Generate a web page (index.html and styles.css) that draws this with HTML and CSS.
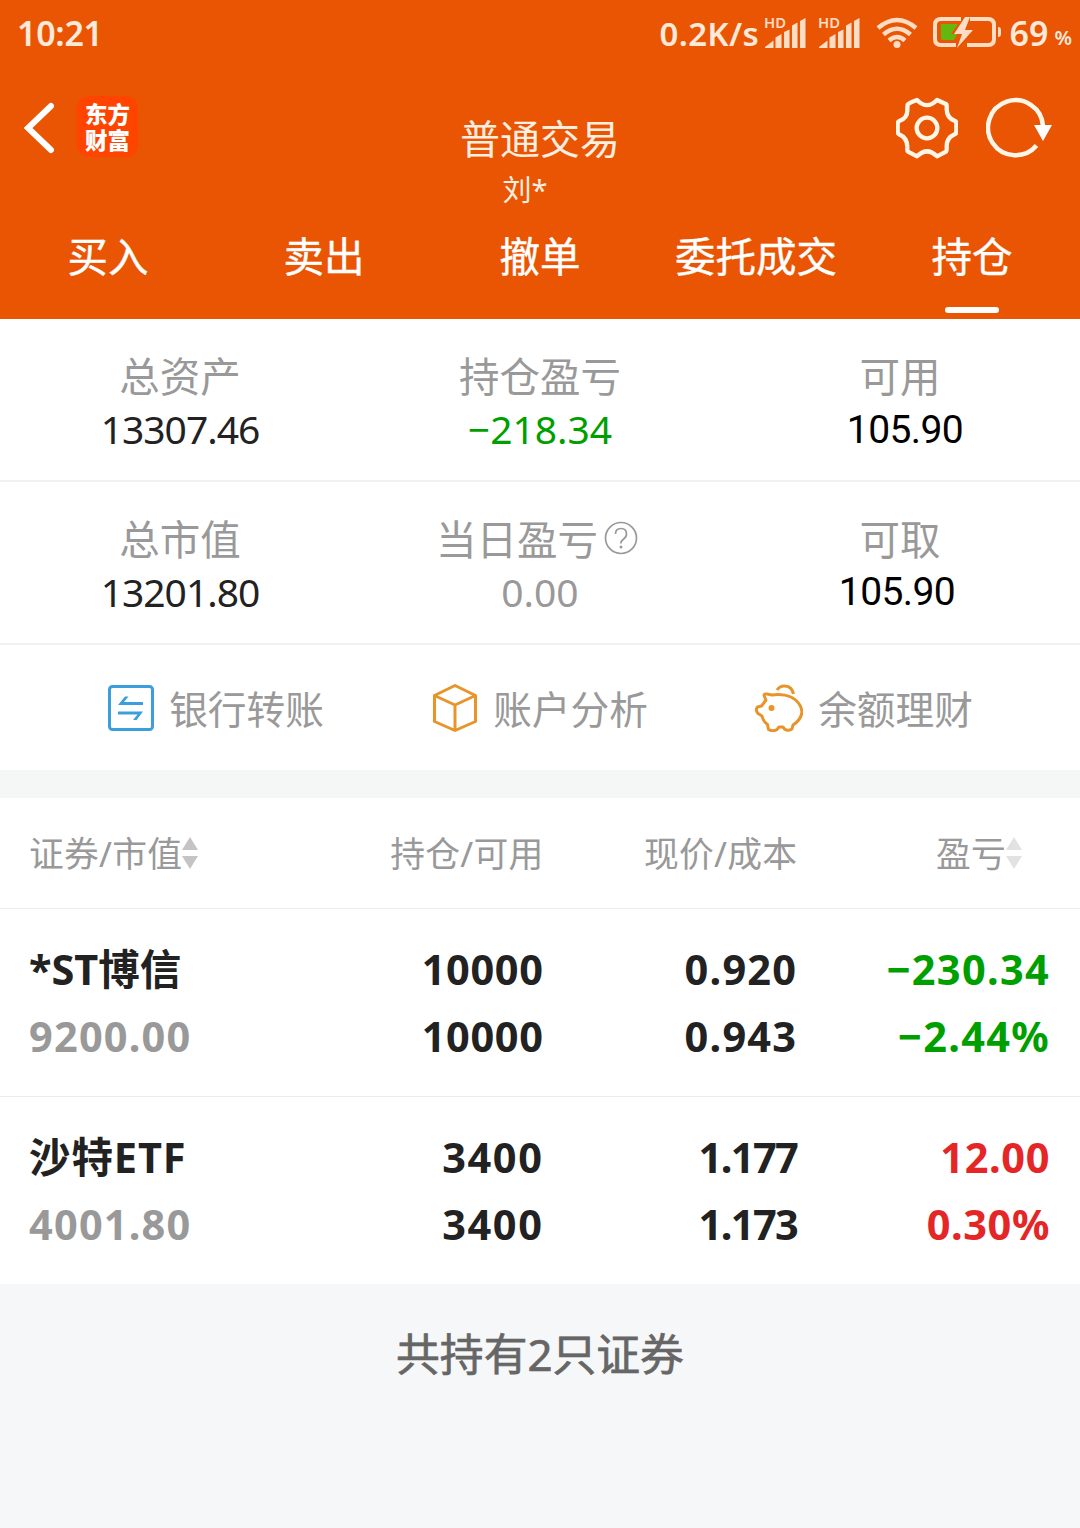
FILE: index.html
```html
<!DOCTYPE html>
<html lang="zh-CN">

<head>
    <meta charset="UTF-8">
    <meta name="viewport" content="width=device-width, initial-scale=1.0">
    <title>普通交易</title>
    <link rel="stylesheet" href="styles.css">
</head>

<body>
    <header class="header">
        <div class="status-bar">
            <div class="clock">10:21</div>
            <div class="status-icons">
                <span class="speed">0.2K/s</span>
                <svg class="signal" width="42" height="34" viewBox="0 0 42 34">
                    <text x="-1" y="12" textLength="22" lengthAdjust="spacingAndGlyphs">HD</text>
                    <path d="M0 32v-1l8.500-6.500V32zM10.500 21.500l6-3.500V32h-6zM19 16l5.500-2.500V32H19zM27 9.500l5.500-3V32H27zM35 5l5.500-3V32H35z" />
                </svg>
                <svg class="signal second" width="42" height="34" viewBox="0 0 42 34">
                    <text x="-1" y="12" textLength="22" lengthAdjust="spacingAndGlyphs">HD</text>
                    <path d="M0 32v-1l8.500-6.500V32zM10.500 21.500l6-3.500V32h-6zM19 16l5.500-2.500V32H19zM27 9.500l5.500-3V32H27zM35 5l5.500-3V32H35z" />
                </svg>
                <svg class="wifi" width="42" height="32" viewBox="0 0 42 32">
                    <path d="M2 11Q21-5 40 11M7.500 17.500Q21 6 34.500 17.500M13 23.500Q21 16.500 29 23.500" />
                    <circle cx="21" cy="27.500" r="3.500" />
                </svg>
                <svg class="battery" width="70" height="34" viewBox="0 0 70 34">
                    <path class="level" d="M9 8h17l-7 10h6l-3 6H11q-2 0-2-2z" />
                    <path class="case" d="M29 3H9Q3 3 3 9v14q0 6 6 6h15M38 3h18q6 0 6 6v14q0 6-6 6H35" />
                    <path class="fill" d="M33 1L22 18h8l-5 14 16-18h-8l5-13zM66 11q3 0 3 3v4q0 3-3 3z" />
                </svg>
                <span class="percent">69</span>
                <span class="percent-sign">%</span>
            </div>
        </div>

        <div class="nav">
            <div class="nav-left">
                <svg class="back" width="32" height="52" viewBox="0 0 32 52">
                    <path d="M28 4L5 26l23 22" />
                </svg>
                <div class="logo">东方<br>财富</div>
            </div>
            <div class="title">
                <div class="title-main">普通交易</div>
                <div class="title-sub">刘*</div>
            </div>
            <div class="nav-right">
                <svg width="62" height="62" viewBox="50 50 186 186">
                    <path d="M85 73Q88 68 113 59Q143 90 173 59L201 72Q203 76 202 86Q202 113 227 122Q231 124 231 130V156Q231 160 226 162Q202 172 202 198Q203 210 200 214L173 228Q143 198 113 228L86 214Q83 212 84 202Q85 173 59 162Q55 160 55 155V131Q55 124 60 122Q86 113 84 86Z" />
                    <circle cx="143" cy="143" r="31" />
                </svg>
                <svg class="refresh" width="66" height="62" viewBox="0 0 66 62">
                    <path d="M50.500 48.500A27.500 27.500 0 1 1 57 29" />
                    <polygon points="48,28 66,28 57,44" />
                </svg>
            </div>
        </div>

        <div class="tabs">
            <div class="tab">买入</div>
            <div class="tab">卖出</div>
            <div class="tab">撤单</div>
            <div class="tab">委托成交</div>
            <div class="tab active">持仓</div>
        </div>
    </header>

    <section class="summary">
        <div class="summary-row">
            <div class="cell">
                <div class="label">总资产</div>
                <div class="value">13307.46</div>
            </div>
            <div class="cell">
                <div class="label">持仓盈亏</div>
                <div class="value wide down">−218.34</div>
            </div>
            <div class="cell">
                <div class="label">可用</div>
                <div class="value cash">105.90</div>
            </div>
        </div>
        <div class="summary-row">
            <div class="cell">
                <div class="label">总市值</div>
                <div class="value">13201.80</div>
            </div>
            <div class="cell">
                <div class="label with-help">当日盈亏
                    <svg class="help" width="34" height="34" viewBox="0 0 34 34">
                        <circle cx="17" cy="17" r="15.500" />
                        <path d="M11.500 13q0-5.500 5.500-5.500t5.500 5.500q0 3-3 5.200t-2.500 4.300" />
                        <circle class="dot" cx="17" cy="26" r="1.500" />
                    </svg>
                </div>
                <div class="value wide muted">0.00</div>
            </div>
            <div class="cell">
                <div class="label">可取</div>
                <div class="value cash withdraw">105.90</div>
            </div>
        </div>
    </section>

    <section class="shortcuts">
        <div class="shortcut">
            <svg class="blue" width="46" height="46" viewBox="0 0 46 46">
                <rect x="1.500" y="1.500" width="43" height="43" rx="3" />
                <path class="arrow" d="M10 20L17 11.500H20.500L16 17H35V20ZM10 26.500H35L28.500 35H25L29.500 29.500H10Z" />
            </svg>
            <span>银行转账</span>
        </div>
        <div class="shortcut">
            <svg class="orange" width="46" height="48" viewBox="0 0 46 48">
                <path d="M23 1.500L43.500 11.500V37.500L23 46.500L2.500 37.500V11.500ZM2.500 11.500L23 21L43.500 11.500M23 21V46.500" />
            </svg>
            <span>账户分析</span>
        </div>
        <div class="shortcut">
            <svg class="orange" width="48" height="48" viewBox="0 0 48 48">
                <path d="M9 11.500Q9 9.500 12 10L17 11Q28 9.500 36 13Q46 18 47 28Q46 36 38 41L37 45Q33 47.500 29.500 45L28 43H24L22 45.500Q18 48 13.500 45.500L12.500 40.500Q8 37 7 32L3 29.500Q0 26 2.500 23L6.500 22L11 16Z" />
                <path d="M22 6Q25 1.500 30 2Q37 2.500 38.500 10" />
                <circle class="dot" cx="16.500" cy="24" r="3" />
            </svg>
            <span>余额理财</span>
        </div>
    </section>

    <section class="holdings">
        <div class="row head">
            <div class="col name">证券/市值<svg class="sort" width="16" height="32" viewBox="0 0 16 32">
                    <path d="M8 0l8 13H0zM8 32l8-13H0z" />
                </svg></div>
            <div class="col amount">持仓/可用</div>
            <div class="col price">现价/成本</div>
            <div class="col profit">盈亏<svg class="sort light" width="16" height="32" viewBox="0 0 16 32">
                    <path d="M8 0l8 13H0zM8 32l8-13H0z" />
                </svg></div>
        </div>
        <div class="row">
            <div class="col name">
                <div>*ST博信</div>
                <div class="market muted">9200.00</div>
            </div>
            <div class="col amount">
                <div>10000</div>
                <div>10000</div>
            </div>
            <div class="col price">
                <div>0.920</div>
                <div>0.943</div>
            </div>
            <div class="col profit down">
                <div>−230.34</div>
                <div>−2.44%</div>
            </div>
        </div>
        <div class="row">
            <div class="col name etf">
                <div>沙特ETF</div>
                <div class="market muted">4001.80</div>
            </div>
            <div class="col amount etf">
                <div>3400</div>
                <div>3400</div>
            </div>
            <div class="col price tight">
                <div>1.177</div>
                <div>1.173</div>
            </div>
            <div class="col profit etf up">
                <div>12.00</div>
                <div>0.30%</div>
            </div>
        </div>
    </section>

    <footer class="footer">共持有2只证券</footer>
</body>

</html>
```
FILE: styles.css
```css
* {
    box-sizing: border-box;
}

body {
    margin: 0;
    min-height: 1528px;
    background-color: #f6f7f9;
    color: #222;
    font-family: "Noto Sans", "Noto Sans CJK SC", sans-serif;
}

svg {
    display: block;
    flex: none;
}

/* Header */
.header {
    height: 319px;
    background-color: #ea5504;
    color: #fff;
}

.status-bar {
    display: flex;
    justify-content: space-between;
    align-items: center;
    height: 66px;
    padding: 0 8px 0 17px;
    color: #ffead9;
    font-size: 34px;
    font-weight: 600;
}

.clock {
    letter-spacing: -0.3px;
}

.status-icons {
    display: flex;
    align-items: center;
}

.speed {
    width: 105px;
    font-size: 33px;
    letter-spacing: 0.3px;
    white-space: nowrap;
}

.signal {
    fill: #ffdcc4;
    overflow: visible;
}

.signal text {
    font-size: 15px;
    font-weight: 600;
}

.second {
    margin-left: 12px;
}

.wifi {
    margin-left: 15px;
    fill: #ffdcc4;
}

.wifi path {
    fill: none;
    stroke: #ffdcc4;
    stroke-width: 4.5;
}

.battery {
    margin: 0 8px 0 14px;
}

.battery .level {
    fill: #64b70f;
}

.battery .case {
    fill: none;
    stroke: #ffdcc4;
    stroke-width: 4;
}

.battery .fill {
    fill: #ffdcc4;
}

.percent-sign {
    margin: 8px 0 0 6px;
    font-size: 20px;
}

.nav {
    display: flex;
    justify-content: space-between;
    height: 154px;
    padding: 0 28px 0 23px;
}

.nav-left,
.nav-right {
    display: flex;
}

.nav-left {
    width: 160px;
    padding-top: 30px;
}

.back {
    margin-top: 6px;
    fill: none;
    stroke: #fff;
    stroke-width: 6;
    stroke-linecap: round;
}

.logo {
    width: 61px;
    height: 61px;
    margin-left: 22px;
    padding-top: 4px;
    border-radius: 12px;
    background-color: #ff4400;
    font-family: "Noto Sans CJK SC", sans-serif;
    font-size: 22.5px;
    font-weight: 900;
    line-height: 26px;
    text-align: center;
}

.title {
    padding-top: 45px;
    text-align: center;
    color: #ffefe0;
}

.title-main {
    font-size: 40px;
    line-height: 56px;
}

.title-sub {
    margin-right: 30px;
    font-size: 29px;
    line-height: 46px;
}

.nav-right {
    width: 155px;
    padding-top: 31px;
    gap: 28px;
    justify-content: flex-end;
    fill: none;
    stroke: #fff6e8;
}

.nav-right svg {
    stroke-width: 13;
    stroke-linejoin: round;
}

.nav-right .refresh {
    stroke-width: 4.5;
}

.refresh polygon {
    fill: #fff;
    stroke: none;
}

.tabs {
    display: flex;
    height: 99px;
}

.tab {
    display: flex;
    flex-direction: column;
    align-items: center;
    justify-content: space-between;
    width: 216px;
    padding: 7px 0 6px;
    font-size: 40.5px;
    line-height: 60px;
    -webkit-text-stroke: 0.4px #fff;
}

.tab.active::after {
    content: "";
    width: 54px;
    height: 6px;
    border-radius: 3px;
    background-color: #fff;
}

/* Account summary */
.summary,
.shortcuts,
.holdings {
    background-color: #fff;
}

.summary-row {
    display: flex;
    height: 163px;
    padding-top: 29px;
    border-bottom: 2px solid #f0f1f1;
}

.cell {
    width: 360px;
    text-align: center;
}

.label {
    padding-top: 1px;
    color: #999;
    font-size: 40.5px;
    line-height: 55px;
}

.with-help {
    display: flex;
    justify-content: center;
    align-items: center;
    gap: 6px;
    margin-left: -6px;
}

.help {
    margin-top: -4px;
    fill: none;
    stroke: #999;
    stroke-width: 1.7;
}

.dot {
    stroke: none;
}

.help .dot {
    fill: #999;
}

.value {
    font-size: 39px;
    line-height: 50px;
    letter-spacing: -1px;
}

.value.wide {
    letter-spacing: 0;
}

.value.cash {
    padding: 1px 0 0 10px;
    color: #000;
    font-family: Roboto, sans-serif;
    letter-spacing: -0.6px;
}

.value.withdraw {
    padding: 0 6px 0 0;
}

.muted {
    color: #999;
}

.down {
    color: #009f00;
}

.up {
    color: #e52626;
}

/* Shortcuts */
.shortcuts {
    display: flex;
    height: 125px;
    padding: 0 54px;
}

.shortcut {
    display: flex;
    justify-content: center;
    align-items: center;
    gap: 15px;
    width: 324px;
    color: #999;
    font-size: 38.7px;
}

.shortcut span {
    margin-top: -2px;
}

.shortcut svg {
    fill: none;
    stroke-width: 3;
    stroke-linejoin: round;
}

.blue {
    stroke: #3a9fdc;
}

.blue .arrow {
    fill: #3a9fdc;
    stroke: none;
}

.orange {
    stroke: #e8942a;
}

.orange .dot {
    fill: #e8942a;
}

/* Holdings */
.holdings {
    border-top: 28px solid #f5f7f7;
}

.row {
    display: flex;
    height: 188px;
    padding: 27px 30px 0 29px;
    font-size: 41.5px;
    font-weight: 700;
    line-height: 67px;
    border-bottom: 1px solid #ececec;
}

.row:last-child {
    height: 187px;
    border-bottom: none;
}

.row.head {
    align-items: center;
    height: 111px;
    padding-top: 0;
    color: #999;
    font-size: 34.8px;
    font-weight: 400;
}

.col {
    text-align: right;
}

.name {
    width: 251px;
    text-align: left;
}

.amount {
    width: 264px;
    letter-spacing: 0.6px;
}

.price {
    width: 254px;
    letter-spacing: 1.2px;
}

.profit {
    width: 253px;
    letter-spacing: 1.3px;
}

.market {
    letter-spacing: 1.2px;
}

.name.etf {
    letter-spacing: 0.9px;
}

.amount.etf {
    letter-spacing: 1.6px;
}

.price.tight {
    letter-spacing: -1.6px;
}

.profit.etf {
    letter-spacing: 0.6px;
}

.head .col {
    letter-spacing: 0.2px;
}

.head .name,
.head .profit {
    display: flex;
    align-items: center;
}

.head .profit {
    justify-content: flex-end;
    padding-right: 28px;
}

.sort {
    fill: #c4c4c4;
}

.sort.light {
    fill: #e2e2e2;
}

.footer {
    padding-top: 40px;
    color: #666;
    text-align: center;
    font-size: 43.8px;
    line-height: 60px;
    -webkit-text-stroke: 0.7px #666;
}
```
